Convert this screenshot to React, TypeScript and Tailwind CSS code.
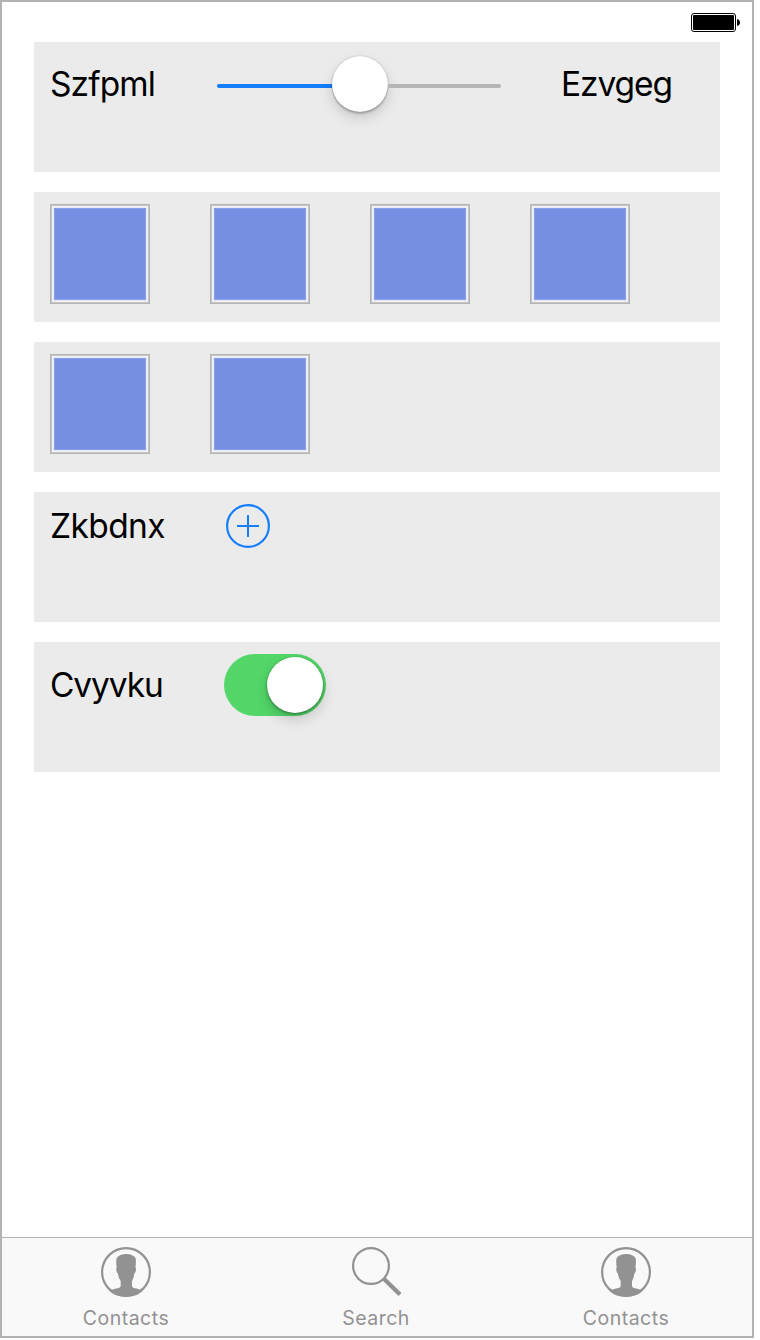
import React, { useState } from "react";

function Card({ children, className = "" }: { children?: React.ReactNode; className?: string }) {
  return <section className={`flex h-[130px] w-[686px] shrink-0 items-start bg-[#ebebeb] pl-4 ${className}`}>{children}</section>;
}

function Tile() {
  return (
    <div className="h-[100px] w-[100px] border border-[#b5b5b5] bg-[#c4c4c4] p-px">
      <div className="h-full w-full border border-[#f3f3f3] bg-[#e6eafa] p-px">
        <div className="h-full w-full border border-[#8a9fea] bg-[#768fe2]" />
      </div>
    </div>
  );
}

function Battery() {
  return (
    <svg width="50" height="20" viewBox="0 0 50 20" aria-label="Battery">
      <rect x="0.5" y="0.5" width="44" height="18" rx="2.5" fill="#fff" stroke="#000" />
      <rect x="2" y="2" width="41" height="15" rx="1" fill="#000" />
      <path d="M46 6C48 6.5 49 7.8 49 9.5S48 12.5 46 13Z" fill="#000" />
    </svg>
  );
}

function ContactIcon() {
  return (
    <svg width="50" height="50" viewBox="0 0 50 50" fill="#929292">
      <circle cx="25" cy="25" r="23.9" fill="none" stroke="#929292" strokeWidth="2.2" />
      <path d="M8.5 44C10.5 42.6 12.5 42.2 15 41.6C17.5 41 19.6 40.6 19.7 39V34C18 32 17.3 29.5 17 26.6C15.6 25.8 15 22.8 15.2 21.2L15.7 20.6C15.3 17.5 14.9 13.5 15.6 11.3C17.4 8.3 21 7 25.4 7C29.8 7 33.2 8.6 34.6 11.3C35.2 13.5 34.8 17.5 34.5 20.6L35 21.2C35.2 22.8 34.6 25.8 33.3 26.6C33 29.5 32.4 32 31 34V39C31.1 40.6 33 41 35.5 41.6C38 42.2 39.5 42.6 41.5 44C37.5 47.8 31.5 49.5 25 49.5S12.5 47.8 8.5 44Z" />
    </svg>
  );
}

function SearchIcon() {
  return (
    <svg width="50" height="50" viewBox="0 0 50 50" fill="none" stroke="#929292">
      <circle cx="20" cy="19" r="17.9" strokeWidth="2.2" />
      <path d="M32.8 31.8L49 47.5" strokeWidth="4.2" />
    </svg>
  );
}

const tabs = [
  { label: "Contacts", Icon: ContactIcon, place: "w-[248px]" },
  { label: "Search", Icon: SearchIcon, place: "w-[252px]" },
  { label: "Contacts", Icon: ContactIcon, place: "w-[248px]" },
];

export default function App() {
  const [on, setOn] = useState(true);
  return (
    <div className="h-[1340px] w-[760px] bg-white font-['Inter',sans-serif] text-black">
      <div className="flex h-[1338px] w-[754px] flex-col border-2 border-[#b3b3b3] bg-white">
        <header className="flex h-10 shrink-0 justify-end pt-[11px] pr-[11px]"><Battery /></header>
        <main className="flex flex-1 flex-col gap-5 pl-8">
          <Card>
            <span className="mt-[22px] w-[167px] text-[33.5px] leading-10 tracking-[-0.9px]">Szfpml</span>
            <div className="mt-[14px] flex h-14 w-[284px] items-center">
              <div className="mt-1 h-1 w-[115px] rounded-l-full bg-[#157efb]" />
              <div className="h-14 w-14 rounded-full bg-white shadow-[0_0_1px_rgba(0,0,0,0.4),0_2px_2px_rgba(0,0,0,0.22),0_6px_13px_rgba(0,0,0,0.15)]" />
              <div className="mt-1 h-1 w-[113px] rounded-r-full bg-[#b5b5b5]" />
            </div>
            <span className="mt-[22px] ml-[60px] text-[33.5px] leading-10 tracking-[-1.1px]">Ezvgeg</span>
          </Card>
          <Card className="gap-[60px] pt-3"><Tile /><Tile /><Tile /><Tile /></Card>
          <Card className="gap-[60px] pt-3"><Tile /><Tile /></Card>
          <Card>
            <span className="mt-[14px] w-[176px] text-[33.5px] leading-10 tracking-[-0.6px]">Zkbdnx</span>
            <button className="mt-3" aria-label="Add">
              <svg width="44" height="44" viewBox="0 0 44 44" fill="none" stroke="#157efb" strokeWidth="2">
                <circle cx="22" cy="22" r="20.9" strokeWidth="2.2" />
                <path d="M11 22H33M22 11V33" />
              </svg>
            </button>
          </Card>
          <Card>
            <span className="mt-[23px] w-[174px] text-[33.5px] leading-10 tracking-[-1.1px]">Cvyvku</span>
            <button role="switch" aria-checked={on} onClick={() => setOn(!on)} className={`mt-3 flex h-[62px] w-[102px] items-center rounded-full px-[3px] ${on ? "justify-end bg-[#53d769]" : "justify-start bg-[#b5b5b5]"}`}>
              <span className="h-14 w-14 rounded-full bg-white shadow-[0_1px_3px_rgba(0,0,0,0.4),0_6px_14px_rgba(0,0,0,0.18)]" />
            </button>
          </Card>
        </main>
        <nav className="flex h-[99px] shrink-0 border-t border-[#b2b2b2] bg-[#f9f9f9]">
          {tabs.map(({ label, Icon, place }, i) => (
            <button key={i} className={`flex flex-col items-center pt-[9px] text-[#929292] ${place}`}>
              <Icon />
              <span className="mt-[9px] text-[19.5px] leading-6 tracking-[0.5px]">{label}</span>
            </button>
          ))}
        </nav>
      </div>
    </div>
  );
}
